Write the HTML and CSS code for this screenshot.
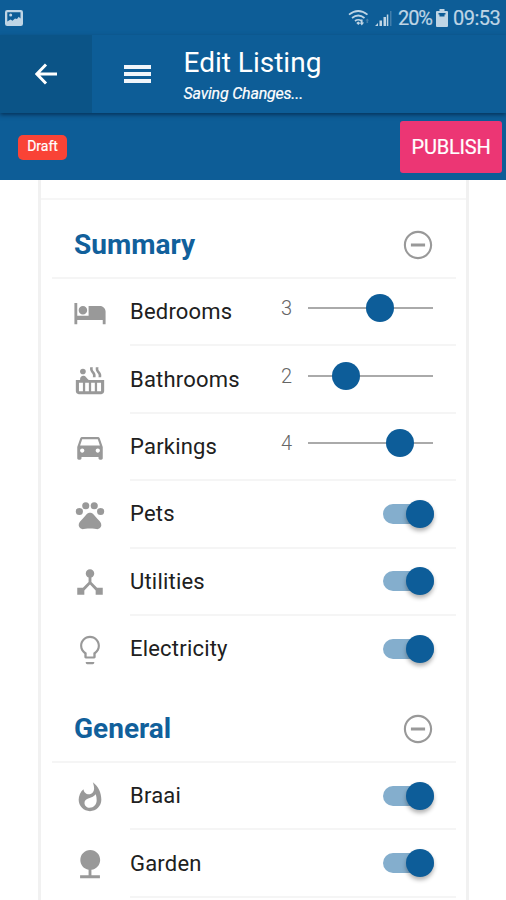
FILE: index.html
```html
<!DOCTYPE html>
<html lang="en">
<head>
<meta charset="utf-8">
<title>Edit Listing</title>
<link rel="stylesheet" href="styles.css">
</head>
<body>
<div class="status">
  <svg class="status-photo" viewBox="0 0 18 16"><rect width="18" height="16" rx="2.2"/><path class="status-cut" d="M2.300 2.300h13.200v6.200l-1.800-1.700-1.700 2.200-2-.5-2.500 2.300-2-1.300-3.200 2z"/><circle cx="5.700" cy="5" r="1.500"/></svg>
  <div class="status-right">
    <svg class="wifi" viewBox="0 0 22 18"><path d="M1 5.700Q10.200-1.700 19.500 5.700M4 9Q10.200 4 16.500 9M7 12Q10.200 9.500 13.500 12"/><path class="wifi-dot" d="M8.300 14l2-1.500 2 1.500-2 2zM13 10.500v3h-1.500l2.300 3 2.300-3h-1.500v-3z"/><path class="wifi-dim" d="M18.500 14v-2.500h-1l1.800-2 1.800 2h-1V14z"/></svg>
    <svg class="signal" viewBox="0 0 18 18"><path d="M1 17l3-3v3zM5.500 11.500H8V17H5.500zM9.500 8H12v9H9.500zM12.800 5.500h1.500V17h-1.500z"/><path class="weak" d="M16 2h1.500v15H16z"/></svg>
    <span class="percent">20%</span>
    <svg class="battery" viewBox="0 0 12 18"><path d="M3.500 0h5v2H11q1 0 1 1v14q0 1-1 1H1q-1 0-1-1V3q0-1 1-1h2.500z"/><path class="status-cut" d="M2.500 4h7v1.500h-1v2h-5v-2h-1z"/></svg>
    <span class="clock">09:53</span>
  </div>
</div>
<header class="header">
  <div class="back"><svg viewBox="0 0 24 22"><path d="M22 11H2M11 1.500L1.800 11l9.200 9.500"/></svg></div>
  <div class="menu"><i></i><i></i><i></i></div>
  <div class="titles"><h1>Edit Listing</h1><p>Saving Changes...</p></div>
</header>
<div class="actions"><span class="draft">Draft</span><button class="publish">PUBLISH</button></div>
<main class="card">
  <div class="card-top"></div>
  <section>
    <div class="section-head"><h2>Summary</h2><svg class="icon" viewBox="0 0 24 24"><path d="M7 11v2h10v-2H7zm5-9C6.480 2 2 6.480 2 12s4.480 10 10 10 10-4.480 10-10S17.520 2 12 2zm0 18.500c-4.700 0-8.500-3.800-8.500-8.500s3.800-8.500 8.500-8.500 8.500 3.800 8.500 8.500-3.800 8.500-8.500 8.500z"/></svg></div>
    <div class="row">
      <svg class="icon" viewBox="0 0 24 24"><path d="M7 13c1.660 0 3-1.340 3-3S8.660 7 7 7s-3 1.340-3 3 1.340 3 3 3zm12-6h-8v7H3V5H1v15h2v-3h18v3h2v-9c0-2.210-1.790-4-4-4z"/></svg>
      <div class="cell"><span class="label">Bedrooms</span><div class="slider"><span>3</span><div class="track"><i style="left:57.500%"></i></div></div></div>
    </div>
    <div class="row">
      <svg class="icon" viewBox="0 0 24 24"><circle cx="7" cy="6" r="2"/><path d="M11.150 12c-.31-.22-.59-.46-.82-.72l-1.400-1.550c-.19-.21-.43-.38-.69-.5-.29-.14-.62-.23-.96-.23h-.03C6.010 9 5 10.010 5 11.250V12H2v8c0 1.100.9 2 2 2h16c1.100 0 2-.9 2-2v-8H11.150zM7 20H4.200v-6H7v6zm4.200 0H8.600v-6h2.600v6zm4.200 0h-2.600v-6h2.600v6zm4.400 0H17v-6h2.800v6zm-1.150-14.140l-.07-.07c-.57-.62-.82-1.410-.67-2.200L18 3h-1.890l-.06.430c-.2 1.360.27 2.710 1.300 3.720l.07.060c.57.620.82 1.410.67 2.200l-.11.590h1.910l.06-.43c.21-1.360-.27-2.710-1.300-3.710zm-4 0l-.07-.07c-.57-.62-.82-1.410-.67-2.200L14 3h-1.890l-.06.430c-.2 1.360.27 2.710 1.300 3.720l.07.060c.57.620.82 1.410.67 2.200l-.11.590h1.910l.06-.43c.21-1.360-.27-2.710-1.300-3.710z"/></svg>
      <div class="cell"><span class="label">Bathrooms</span><div class="slider"><span>2</span><div class="track"><i style="left:30.500%"></i></div></div></div>
    </div>
    <div class="row">
      <svg class="icon" viewBox="0 0 24 24"><path d="M18.920 6.010C18.720 5.420 18.160 5 17.500 5h-11c-.66 0-1.210.42-1.420 1.010L3 12v8c0 .55.45 1 1 1h1c.55 0 1-.45 1-1v-1h12v1c0 .55.45 1 1 1h1c.55 0 1-.45 1-1v-8l-2.080-5.990zM6.500 16c-.83 0-1.500-.67-1.500-1.500S5.670 13 6.500 13s1.500.67 1.500 1.500S7.330 16 6.500 16zm11 0c-.83 0-1.500-.67-1.500-1.500s.67-1.500 1.500-1.500 1.500.67 1.500 1.500-.67 1.500-1.500 1.500zM5 11l1.500-4.500h11L19 11H5z"/></svg>
      <div class="cell"><span class="label">Parkings</span><div class="slider"><span>4</span><div class="track"><i style="left:73.500%"></i></div></div></div>
    </div>
    <div class="row">
      <svg class="icon" viewBox="0 0 24 24"><circle cx="4.500" cy="9.500" r="2.500"/><circle cx="9" cy="5.500" r="2.500"/><circle cx="15" cy="5.500" r="2.500"/><circle cx="19.500" cy="9.500" r="2.500"/><path d="M17.340 14.860c-.87-1.020-1.600-1.890-2.480-2.910-.46-.54-1.050-1.080-1.750-1.320-.7-.2-1.500-.2-2.220 0-.7.240-1.280.78-1.740 1.320-.87 1.020-1.600 1.890-2.480 2.910-1.310 1.310-2.920 2.760-2.620 4.790.29 1.020 1.020 2.030 2.330 2.320.73.150 3.060-.44 5.540-.44h.18c2.480 0 4.810.58 5.540.44 1.310-.29 2.040-1.310 2.330-2.320.31-2.040-1.300-3.490-2.610-4.800z"/></svg>
      <div class="cell"><span class="label">Pets</span><div class="toggle"></div></div>
    </div>
    <div class="row">
      <svg class="icon" viewBox="0 0 24 24"><path d="M17 16l-4-4V8.820C14.160 8.400 15 7.300 15 6c0-1.660-1.340-3-3-3S9 4.340 9 6c0 1.300.84 2.400 2 2.820V12l-4 4H3v5h5v-3.050l4-4.200 4 4.200V21h5v-5h-4z"/></svg>
      <div class="cell"><span class="label">Utilities</span><div class="toggle"></div></div>
    </div>
    <div class="row last">
      <svg class="icon" viewBox="0 0 24 24"><path d="M9 21c0 .55.45 1 1 1h4c.55 0 1-.45 1-1v-.5H9v.5zm3-19C8.140 2 5 5.140 5 9c0 2.380 1.190 4.470 3 5.740V17c0 .55.45 1 1 1h6c.55 0 1-.45 1-1v-2.260c1.810-1.270 3-3.360 3-5.740 0-3.860-3.140-7-7-7zm2.850 11.600l-.5.400V16.500h-4.700V14l-.5-.4C7.600 12.500 6.500 11 6.500 9c0-3 2.500-5.500 5.500-5.500s5.500 2.500 5.500 5.500c0 2-1.100 3.500-2.650 4.600z"/></svg>
      <div class="cell"><span class="label">Electricity</span><div class="toggle"></div></div>
    </div>
  </section>
  <section>
    <div class="section-head"><h2>General</h2><svg class="icon" viewBox="0 0 24 24"><path d="M7 11v2h10v-2H7zm5-9C6.480 2 2 6.480 2 12s4.480 10 10 10 10-4.480 10-10S17.520 2 12 2zm0 18.500c-4.700 0-8.500-3.800-8.500-8.500s3.800-8.500 8.500-8.500 8.500 3.800 8.500 8.500-3.800 8.500-8.500 8.500z"/></svg></div>
    <div class="row">
      <svg class="icon" viewBox="0 0 24 24"><path d="M14 1.500s1 2.500.9 4.600c0 1.800-1.100 3.500-3 3.900-2.300.4-4.300-1.200-4.500-3.500C5.300 8.200 4 11.200 4 14c0 4.420 3.580 8 8 8s8-3.580 8-8C20 9 18 4.500 14 1.500zM11.710 19.600c-2 0-3.600-1.600-3.600-3.400 0-1.800 1.200-3 3.100-3.400 1.900-.4 3.800-1.300 4.900-2.700.4 1.400.6 2.800.6 4.200 0 2.900-2.100 5.300-5 5.300z"/></svg>
      <div class="cell"><span class="label">Braai</span><div class="toggle"></div></div>
    </div>
    <div class="row">
      <svg class="icon" viewBox="0 0 24 24"><path d="M13 16.120c3.470-.41 6.170-3.360 6.170-6.950 0-3.870-3.130-7-7-7s-7 3.130-7 7c0 3.470 2.520 6.340 5.830 6.890V20H5v2h14v-2h-6v-3.880z"/></svg>
      <div class="cell"><span class="label">Garden</span><div class="toggle"></div></div>
    </div>
  </section>
</main>
</body>
</html>
```
FILE: styles.css
```css
* { box-sizing: border-box; }
html, body { height: 900px; overflow: hidden; }
body { margin: 0; background: #fff; font-family: Roboto, sans-serif; color: #202020; }
h1, h2, p { margin: 0; }
.status { height: 35px; padding: 0 6px 0 5px; background: #0d5d97; color: #bfd5e5; display: flex; align-items: center; justify-content: space-between; }
.status svg { fill: #bfd5e5; display: block; }
.status .status-cut { fill: #0d5d97; }
.status-photo { width: 18px; height: 16px; }
.status-right { display: flex; align-items: center; font-size: 20px; line-height: 35px; }
.wifi { width: 22px; height: 18px; }
.wifi path { fill: none; stroke: #bfd5e5; stroke-width: 1.7; }
.wifi .wifi-dot { fill: #bfd5e5; stroke: none; }
.wifi .wifi-dim { fill: #447fab; stroke: none; }
.signal { width: 18px; height: 18px; margin-left: 4px; }
.signal .weak { fill: #447fab; }
.percent { margin-left: 6px; width: 34px; letter-spacing: -1.1px; }
.battery { width: 12px; height: 18px; margin: 0 5px 0 4px; }
.clock { letter-spacing: -.5px; width: 47px; white-space: nowrap; }
.percent, .clock { padding-top: 1px; -webkit-text-stroke: .2px #bfd5e5; }
.header { position: relative; z-index: 1; height: 78px; background: #0d5d97; color: #fff; display: flex; box-shadow: 0 2px 4px rgba(0,20,45,.55); }
.back { width: 92px; background: #0b5487; display: flex; align-items: center; justify-content: center; }
.back svg { width: 24px; height: 22px; margin-left: 2px; fill: none; stroke: #fff; stroke-width: 3; }
.menu { width: 27px; margin-left: 32px; display: flex; flex-direction: column; justify-content: center; gap: 3px; }
.menu i { height: 4px; background: #f0f5fa; }
.titles { margin-left: 32.500px; padding-top: 10px; }
h1 { font-size: 28px; line-height: 36px; font-weight: 400; }
.titles p { font-size: 16px; line-height: 20px; margin-top: 3px; font-style: italic; font-weight: 400; letter-spacing: -.2px; -webkit-text-stroke: .2px #fff; }
.actions { height: 67px; background: #0d5d97; padding: 8px 4px 7px 18px; display: flex; justify-content: space-between; align-items: flex-start; }
.draft { margin-top: 14px; width: 49px; height: 25px; border-radius: 5px; background: #f94336; color: #fff; font-size: 14px; line-height: 23px; text-align: center; -webkit-text-stroke: .2px #fff; }
.publish { width: 102px; height: 52px; padding: 0; border: 0; border-radius: 3px; background: #ec3674; color: #fff; font: 400 20px/50px Roboto, sans-serif; letter-spacing: -.2px; -webkit-text-stroke: .2px #fff; }
.card { height: 720px; margin: 0 37px 0 38px; padding: 0 10px 0 11px; border: solid #f1f1f1; border-width: 0 3px; overflow: hidden; }
.card-top { height: 20px; margin: 0 -10px 0 -11px; border-bottom: 2px solid #f6f6f6; }
.section-head { height: 79px; padding: 13px 21px 0 22px; display: flex; align-items: center; justify-content: space-between; border-bottom: 2px solid #f5f5f5; }
h2 { font-size: 28px; line-height: 36px; font-weight: 700; color: #11609b; }
.icon { width: 34px; height: 34px; fill: #999; flex: none; }
.row { height: 67.400px; padding-left: 21px; display: flex; align-items: center; }
.cell { flex: 1; height: 100%; margin-left: 23px; padding-right: 22px; display: flex; align-items: center; justify-content: space-between; border-bottom: 2px solid #f5f5f5; }
.last { height: 68px; }
.last .cell { border-color: transparent; }
.label { font-size: 22px; letter-spacing: .2px; }
.slider { display: flex; align-items: center; margin: -7px 1px 0 0; }
.slider span { width: 27px; font-size: 20px; font-weight: 300; color: #666; }
.track { position: relative; width: 125px; height: 2px; background: #aaa; }
.track i { position: absolute; top: -13px; width: 28px; height: 28px; margin-left: -14px; border-radius: 50%; background: #0d5d99; }
.toggle { width: 51px; height: 28px; display: flex; align-items: center; justify-content: flex-end; position: relative; }
.toggle::before { content: ""; width: 51px; height: 20px; border-radius: 10px; background: #84aecd; }
.toggle::after { content: ""; position: absolute; right: 0; width: 28px; height: 28px; border-radius: 50%; background: #0d5d99; box-shadow: 0 3px 4px rgba(0,0,0,.3); }
```
